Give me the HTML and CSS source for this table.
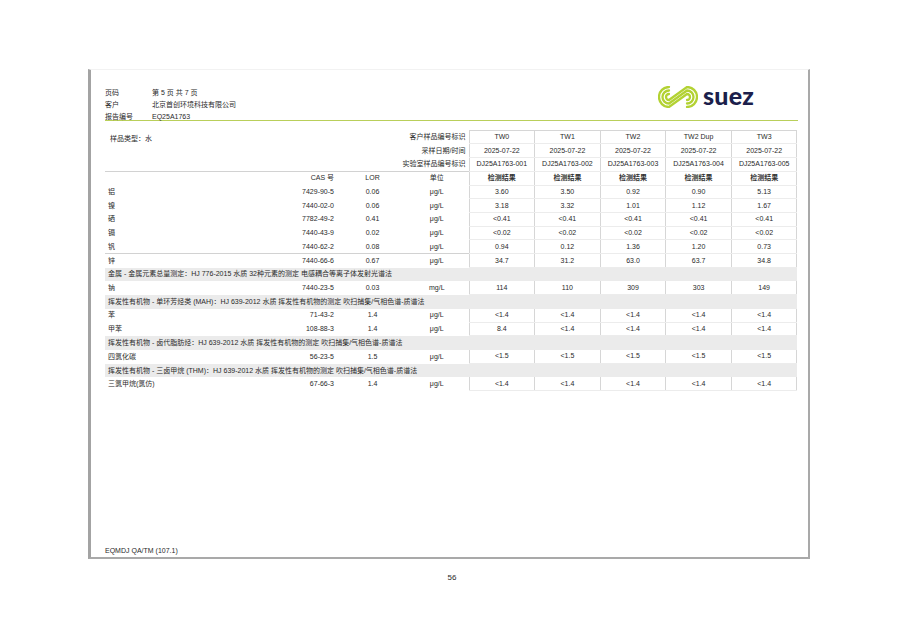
FILE: index.html
```html
<!DOCTYPE html>
<html lang="zh">
<head>
<meta charset="utf-8">
<title>报告</title>
<link rel="stylesheet" href="styles.css">
</head>
<body>
<div class="page">
  <div class="head">
    <div class="meta">
      <div class="meta-row"><span class="k">页码</span><span>第 5 页 共 7 页</span></div>
      <div class="meta-row"><span class="k">客户</span><span>北京首创环境科技有限公司</span></div>
      <div class="meta-row last"><span class="k">报告编号</span><span>EQ25A1763</span></div>
    </div>
    <div class="logo">
      <svg class="swirl" viewBox="0 0 40 22" width="40" height="22">
        <g fill="none" stroke="#b3d233" stroke-width="2.3" stroke-linecap="round">
          <path d="M11 8 A3 3 0 1 0 11 14 L29 1 A10 10 0 1 1 29 21"/>
          <path d="M11 4.5 A6.5 6.5 0 1 0 11 17.5 L29 4.5 A6.5 6.5 0 1 1 29 17.5"/>
          <path d="M11 1 A10 10 0 1 0 11 21 L29 8 A3 3 0 1 1 29 14"/>
        </g>
      </svg>
      <span class="brand">suez</span>
    </div>
  </div>

  <table class="res">
    <colgroup>
      <col class="c-name"><col class="c-cas"><col class="c-lor"><col class="c-unit">
      <col class="c-v"><col class="c-v"><col class="c-v"><col class="c-v"><col class="c-v">
    </colgroup>
    <tr class="first">
      <td colspan="2" class="type">样品类型：水</td>
      <td colspan="2" class="lab">客户样品编号标识</td>
      <td class="v">TW0</td><td class="v">TW1</td><td class="v">TW2</td><td class="v">TW2 Dup</td><td class="v">TW3</td>
    </tr>
    <tr>
      <td colspan="4" class="lab">采样日期/时间</td>
      <td class="v">2025-07-22</td><td class="v">2025-07-22</td><td class="v">2025-07-22</td><td class="v">2025-07-22</td><td class="v">2025-07-22</td>
    </tr>
    <tr>
      <td colspan="4" class="lab">实验室样品编号标识</td>
      <td class="v">DJ25A1763-001</td><td class="v">DJ25A1763-002</td><td class="v">DJ25A1763-003</td><td class="v">DJ25A1763-004</td><td class="v">DJ25A1763-005</td>
    </tr>
    <tr class="ruled">
      <td></td><td class="cas">CAS 号</td><td class="ctr">LOR</td><td class="ctr">单位</td>
      <td class="v b">检测结果</td><td class="v b">检测结果</td><td class="v b">检测结果</td><td class="v b">检测结果</td><td class="v b">检测结果</td>
    </tr>
    <tr>
      <td class="nm">铝</td><td class="cas">7429-90-5</td><td class="ctr">0.06</td><td class="ctr">μg/L</td>
      <td class="v">3.60</td><td class="v">3.50</td><td class="v">0.92</td><td class="v">0.90</td><td class="v">5.13</td>
    </tr>
    <tr>
      <td class="nm">镍</td><td class="cas">7440-02-0</td><td class="ctr">0.06</td><td class="ctr">μg/L</td>
      <td class="v">3.18</td><td class="v">3.32</td><td class="v">1.01</td><td class="v">1.12</td><td class="v">1.67</td>
    </tr>
    <tr>
      <td class="nm">硒</td><td class="cas">7782-49-2</td><td class="ctr">0.41</td><td class="ctr">μg/L</td>
      <td class="v">&lt;0.41</td><td class="v">&lt;0.41</td><td class="v">&lt;0.41</td><td class="v">&lt;0.41</td><td class="v">&lt;0.41</td>
    </tr>
    <tr>
      <td class="nm">镉</td><td class="cas">7440-43-9</td><td class="ctr">0.02</td><td class="ctr">μg/L</td>
      <td class="v">&lt;0.02</td><td class="v">&lt;0.02</td><td class="v">&lt;0.02</td><td class="v">&lt;0.02</td><td class="v">&lt;0.02</td>
    </tr>
    <tr>
      <td class="nm">钒</td><td class="cas">7440-62-2</td><td class="ctr">0.08</td><td class="ctr">μg/L</td>
      <td class="v">0.94</td><td class="v">0.12</td><td class="v">1.36</td><td class="v">1.20</td><td class="v">0.73</td>
    </tr>
    <tr class="ruled">
      <td class="nm">锌</td><td class="cas">7440-66-6</td><td class="ctr">0.67</td><td class="ctr">μg/L</td>
      <td class="v">34.7</td><td class="v">31.2</td><td class="v">63.0</td><td class="v">63.7</td><td class="v">34.8</td>
    </tr>
    <tr class="sec">
      <td colspan="9">金属 - 金属元素总量测定：HJ 776-2015 水质 32种元素的测定 电感耦合等离子体发射光谱法</td>
    </tr>
    <tr>
      <td class="nm">钠</td><td class="cas">7440-23-5</td><td class="ctr">0.03</td><td class="ctr">mg/L</td>
      <td class="v">114</td><td class="v">110</td><td class="v">309</td><td class="v">303</td><td class="v">149</td>
    </tr>
    <tr class="sec">
      <td colspan="9">挥发性有机物 - 单环芳烃类 (MAH)：HJ 639-2012 水质 挥发性有机物的测定 吹扫捕集/气相色谱-质谱法</td>
    </tr>
    <tr>
      <td class="nm">苯</td><td class="cas">71-43-2</td><td class="ctr">1.4</td><td class="ctr">μg/L</td>
      <td class="v">&lt;1.4</td><td class="v">&lt;1.4</td><td class="v">&lt;1.4</td><td class="v">&lt;1.4</td><td class="v">&lt;1.4</td>
    </tr>
    <tr>
      <td class="nm">甲苯</td><td class="cas">108-88-3</td><td class="ctr">1.4</td><td class="ctr">μg/L</td>
      <td class="v">8.4</td><td class="v">&lt;1.4</td><td class="v">&lt;1.4</td><td class="v">&lt;1.4</td><td class="v">&lt;1.4</td>
    </tr>
    <tr class="sec">
      <td colspan="9">挥发性有机物 - 卤代脂肪烃：HJ 639-2012 水质 挥发性有机物的测定 吹扫捕集/气相色谱-质谱法</td>
    </tr>
    <tr>
      <td class="nm">四氯化碳</td><td class="cas">56-23-5</td><td class="ctr">1.5</td><td class="ctr">μg/L</td>
      <td class="v">&lt;1.5</td><td class="v">&lt;1.5</td><td class="v">&lt;1.5</td><td class="v">&lt;1.5</td><td class="v">&lt;1.5</td>
    </tr>
    <tr class="sec">
      <td colspan="9">挥发性有机物 - 三卤甲烷 (THM)：HJ 639-2012 水质 挥发性有机物的测定 吹扫捕集/气相色谱-质谱法</td>
    </tr>
    <tr>
      <td class="nm">三氯甲烷(氯仿)</td><td class="cas">67-66-3</td><td class="ctr">1.4</td><td class="ctr">μg/L</td>
      <td class="v">&lt;1.4</td><td class="v">&lt;1.4</td><td class="v">&lt;1.4</td><td class="v">&lt;1.4</td><td class="v">&lt;1.4</td>
    </tr>
  </table>

  <div class="foot">EQMDJ QA/TM (107.1)</div>
</div>
<div class="pageno">56</div>
</body>
</html>
```

FILE: styles.css
```css
html, body {
  margin: 0;
  padding: 0;
  background: #ffffff;
}
body {
  width: 900px;
  height: 636px;
  font-family: "Liberation Sans", "Noto Sans CJK SC", sans-serif;
  color: #2a2a2a;
  font-size: 7px;
}
.page {
  margin: 69px 0 0 88px;
  width: 722px;
  height: 490px;
  box-sizing: border-box;
  border-top: 1px solid #f2f2f2;
  border-left: 3px solid #a3a3a3;
  border-right: 2px solid #a9a9a9;
  border-bottom: 2px solid #a9a9a9;
  padding: 14px 10px 0 14px;
  display: flex;
  flex-direction: column;
}
.head {
  display: flex;
  justify-content: space-between;
  align-items: flex-start;
  border-bottom: 1px solid #b9cf5a;
}
.meta {
  padding-top: 2.5px;
}
.meta-row {
  display: flex;
  line-height: 12.4px;
  height: 12.4px;
}
.meta-row.last {
  margin-bottom: -4px;
}
.meta-row .k {
  width: 47px;
}
.logo {
  display: flex;
  align-items: center;
  gap: 5px;
  margin-right: 44px;
}
.swirl {
  display: block;
}
.brand {
  font-family: Lato, "Liberation Sans", sans-serif;
  font-weight: 900;
  font-size: 25px;
  line-height: 22px;
  color: #1c1f4c;
  letter-spacing: 0.2px;
  padding-bottom: 3px;
}
.res {
  margin-top: 9px;
  width: 692px;
  border-collapse: collapse;
  table-layout: fixed;
}
.c-name { width: 135px; }
.c-cas { width: 100px; }
.c-lor { width: 65px; }
.c-unit { width: 64px; }
.c-v { width: 65.6px; }
.res tr {
  height: 13.72px;
}
.res td {
  padding: 0;
  line-height: 10px;
  white-space: nowrap;
  overflow: hidden;
}
.res td.v {
  text-align: center;
  border-left: 1px solid #d6d6d6;
  border-right: 1px solid #d6d6d6;
  border-bottom: 1px solid #ececec;
}
.res tr.first td.v {
  border-top: 1px solid #d6d6d6;
}
.res tr.ruled td {
  border-top: 1px solid #d2d2d2;
}
.res td.b {
  font-weight: bold;
  color: #333;
}
.type {
  padding-left: 5px !important;
  padding-top: 3px !important;
}
.lab {
  text-align: right;
  padding-right: 3px !important;
}
.nm {
  padding-left: 3px !important;
}
.cas {
  text-align: right;
  padding-right: 6px !important;
}
.ctr {
  text-align: center;
}
.res tr.sec td {
  background: #ebebeb;
  padding-left: 3px;
  color: #2a2a2a;
}
.foot {
  margin-top: auto;
  padding-bottom: 1px;
  line-height: 10px;
}
.pageno {
  width: 904px;
  text-align: center;
  margin-top: 14px;
  font-size: 8px;
  line-height: 10px;
}
```
